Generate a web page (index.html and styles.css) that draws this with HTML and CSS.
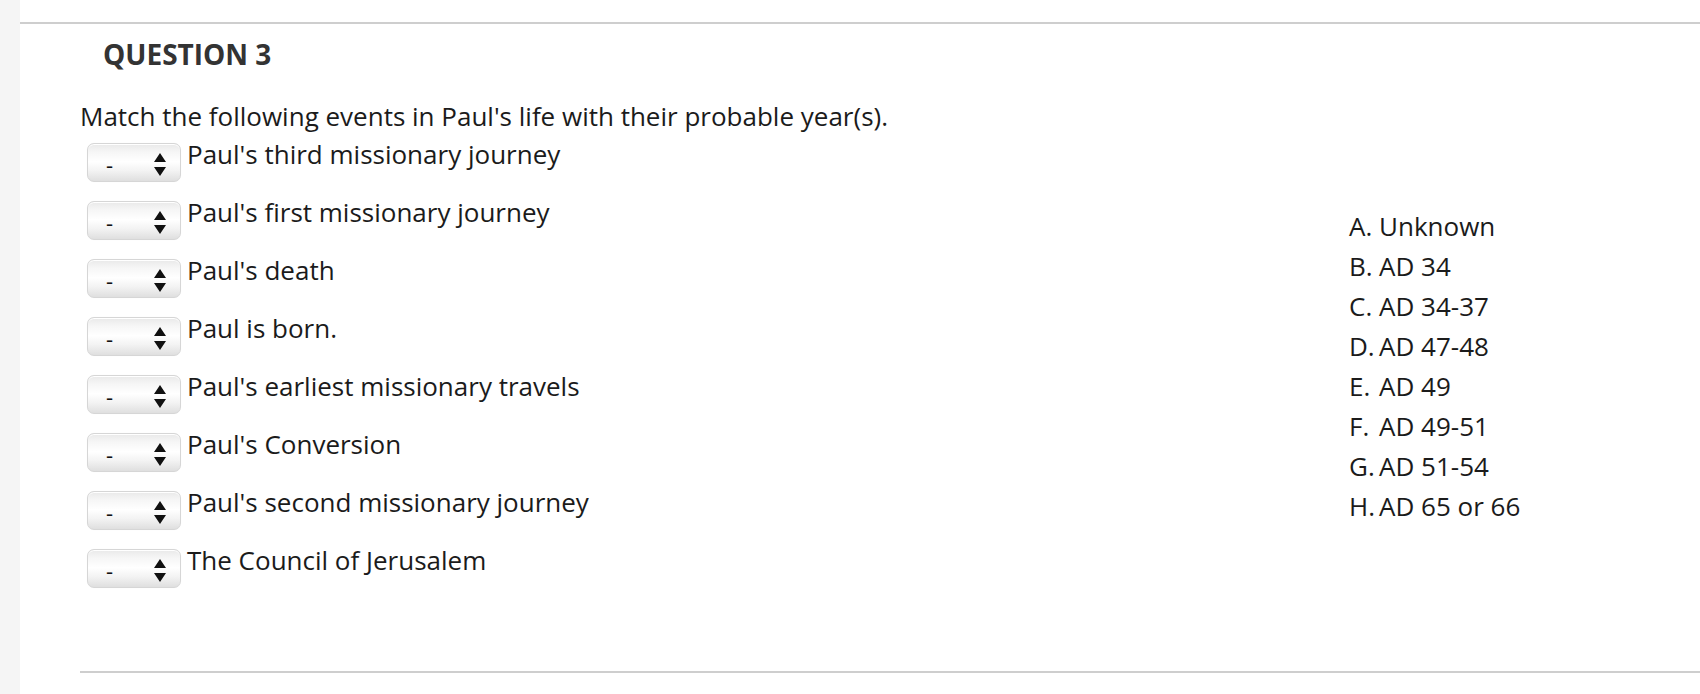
FILE: index.html
```html
<!DOCTYPE html>
<html lang="en">
<head>
<meta charset="utf-8">
<title>Question 3</title>
<link rel="stylesheet" href="styles.css">
</head>
<body>
<div class="rail"></div>
<main class="page">
  <div class="content">
    <h2 class="qtitle">QUESTION 3</h2>
    <p class="prompt">Match the following events in Paul's life with their probable year(s).</p>
    <div class="match">
      <ul class="events">
        <li class="event"><div class="select"><span class="val">-</span><svg class="arrows" width="12" height="23" viewBox="0 0 12 23"><path d="M6 0L12 9H0Z M0 14H12L6 23Z"/></svg></div><span class="label">Paul's third missionary journey</span></li>
        <li class="event"><div class="select"><span class="val">-</span><svg class="arrows" width="12" height="23" viewBox="0 0 12 23"><path d="M6 0L12 9H0Z M0 14H12L6 23Z"/></svg></div><span class="label">Paul's first missionary journey</span></li>
        <li class="event"><div class="select"><span class="val">-</span><svg class="arrows" width="12" height="23" viewBox="0 0 12 23"><path d="M6 0L12 9H0Z M0 14H12L6 23Z"/></svg></div><span class="label">Paul's death</span></li>
        <li class="event"><div class="select"><span class="val">-</span><svg class="arrows" width="12" height="23" viewBox="0 0 12 23"><path d="M6 0L12 9H0Z M0 14H12L6 23Z"/></svg></div><span class="label">Paul is born.</span></li>
        <li class="event"><div class="select"><span class="val">-</span><svg class="arrows" width="12" height="23" viewBox="0 0 12 23"><path d="M6 0L12 9H0Z M0 14H12L6 23Z"/></svg></div><span class="label">Paul's earliest missionary travels</span></li>
        <li class="event"><div class="select"><span class="val">-</span><svg class="arrows" width="12" height="23" viewBox="0 0 12 23"><path d="M6 0L12 9H0Z M0 14H12L6 23Z"/></svg></div><span class="label">Paul's Conversion</span></li>
        <li class="event"><div class="select"><span class="val">-</span><svg class="arrows" width="12" height="23" viewBox="0 0 12 23"><path d="M6 0L12 9H0Z M0 14H12L6 23Z"/></svg></div><span class="label">Paul's second missionary journey</span></li>
        <li class="event"><div class="select"><span class="val">-</span><svg class="arrows" width="12" height="23" viewBox="0 0 12 23"><path d="M6 0L12 9H0Z M0 14H12L6 23Z"/></svg></div><span class="label">The Council of Jerusalem</span></li>
      </ul>
      <table class="answers">
        <tr><td class="letter">A.</td><td>Unknown</td></tr>
        <tr><td class="letter">B.</td><td>AD 34</td></tr>
        <tr><td class="letter">C.</td><td>AD 34-37</td></tr>
        <tr><td class="letter">D.</td><td>AD 47-48</td></tr>
        <tr><td class="letter">E.</td><td>AD 49</td></tr>
        <tr><td class="letter">F.</td><td>AD 49-51</td></tr>
        <tr><td class="letter">G.</td><td>AD 51-54</td></tr>
        <tr><td class="letter">H.</td><td>AD 65 or 66</td></tr>
      </table>
    </div>
    <div class="divider"></div>
  </div>
</main>
</body>
</html>
```

FILE: styles.css
```css
html, body {
  margin: 0;
  padding: 0;
  background: #ffffff;
}
body {
  display: flex;
  min-height: 694px;
  font-family: "Open Sans", "DejaVu Sans", sans-serif;
  color: #1b1b1b;
  overflow: hidden;
}
.rail {
  width: 20px;
  flex: 0 0 20px;
  background: #f5f5f5;
}
.page {
  flex: 1;
  margin-top: 22px;
  border-top: 2px solid #cecece;
}
.content {
  padding-left: 60px;
}
.qtitle {
  margin: 12px 0 0 0;
  padding-left: 23px;
  font-size: 28px;
  line-height: 36px;
  font-weight: 700;
  color: #333333;
}
.prompt {
  margin: 29px 0 0 0;
  font-size: 26px;
  line-height: 30px;
}
.match {
  display: grid;
  grid-template-columns: 1fr 351px;
  align-items: center;
  margin-top: 12px;
}
.events {
  list-style: none;
  margin: 0;
  padding: 0 0 0 7px;
  display: flex;
  flex-direction: column;
  gap: 19px;
}
.event {
  display: flex;
  align-items: flex-start;
  gap: 6px;
}
.select {
  position: relative;
  box-sizing: border-box;
  width: 94px;
  height: 39px;
  flex: 0 0 94px;
  border: 1px solid #d6d6d6;
  border-radius: 7px;
  background: linear-gradient(to bottom, #e9e9e9 0%, #f6f6f6 22%, #ffffff 48%, #f3f3f3 72%, #dfdfdf 100%);
  box-shadow: inset 0 1px 0 #ffffff, 0 0 1px rgba(0, 0, 0, 0.05);
}
.val {
  position: absolute;
  left: 18px;
  top: 8px;
  font-size: 22px;
  line-height: 24px;
  color: #111;
}
.arrows {
  position: absolute;
  left: 66px;
  top: 9px;
  fill: #111;
}
.label {
  font-size: 26px;
  line-height: 22px;
}
.answers {
  border-collapse: collapse;
  font-size: 26px;
  line-height: 40px;
}
.answers td {
  padding: 0;
  white-space: nowrap;
}
.answers .letter {
  width: 30px;
}
.divider {
  margin-top: 83px;
  border-top: 2px solid #cecece;
}
```
